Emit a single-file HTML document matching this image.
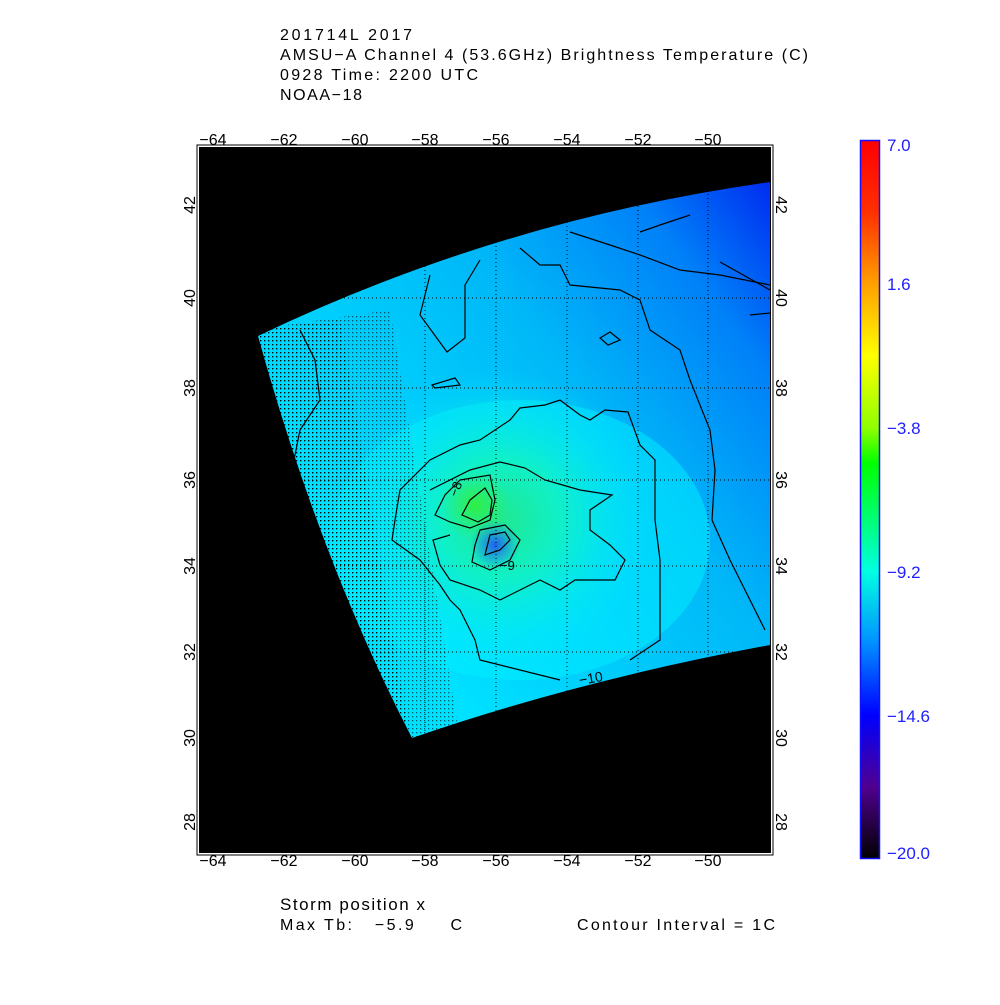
<!DOCTYPE html>
<html><head><meta charset="utf-8"><style>
body{margin:0;background:#fff;width:1000px;height:1000px;overflow:hidden;font-family:"Liberation Sans",sans-serif}
</style></head><body>
<svg width="1000" height="1000" xmlns="http://www.w3.org/2000/svg" font-family="Liberation Sans, sans-serif">
<defs>
<clipPath id="sw"><path d="M258,336 Q500,220 770,182 L770,645 Q580,680 412,738 Q320,560 258,336 Z"/></clipPath>
<radialGradient id="g1" cx="500" cy="520" r="150" gradientUnits="userSpaceOnUse">
<stop offset="0" stop-color="#20e890"/><stop offset="0.4" stop-color="#10f0c8"/><stop offset="1" stop-color="#00e8ff" stop-opacity="0"/></radialGradient>
<radialGradient id="g2" cx="475" cy="505" r="35" gradientUnits="userSpaceOnUse">
<stop offset="0" stop-color="#30ee40"/><stop offset="1" stop-color="#30ee60" stop-opacity="0"/></radialGradient>
<radialGradient id="g3" cx="495" cy="545" r="25" gradientUnits="userSpaceOnUse">
<stop offset="0" stop-color="#2060f0"/><stop offset="1" stop-color="#2080f0" stop-opacity="0"/></radialGradient>
<linearGradient id="bg" x1="330" y1="520" x2="770" y2="190" gradientUnits="userSpaceOnUse">
<stop offset="0" stop-color="#00e0ff"/><stop offset="0.5" stop-color="#00b8f8"/><stop offset="0.8" stop-color="#0080f8"/><stop offset="1" stop-color="#0030f0"/></linearGradient>
<linearGradient id="cb" x1="0" y1="0" x2="0" y2="1">
<stop offset="0" stop-color="#ff0000"/><stop offset="0.1" stop-color="#ff3000"/><stop offset="0.2" stop-color="#ffa000"/><stop offset="0.3" stop-color="#ffff00"/><stop offset="0.4" stop-color="#90ff00"/><stop offset="0.45" stop-color="#00ff00"/><stop offset="0.6" stop-color="#00ffe0"/><stop offset="0.7" stop-color="#0090ff"/><stop offset="0.8" stop-color="#0000ff"/><stop offset="0.9" stop-color="#500090"/><stop offset="1" stop-color="#000000"/></linearGradient>
<pattern id="dots" width="4" height="4" patternUnits="userSpaceOnUse"><rect width="1.3" height="1.3" fill="#000"/></pattern>
</defs>
<g font-size="16">
<text x="280" y="40" textLength="132">201714L 2017</text>
<text x="280" y="60" textLength="528">AMSU−A Channel 4 (53.6GHz) Brightness Temperature (C)</text>
<text x="280" y="80" textLength="198">0928 Time: 2200 UTC</text>
<text x="280" y="100" textLength="82">NOAA−18</text>
</g>
<rect x="199.5" y="147.5" width="571" height="705" fill="#000" stroke="#000"/>
<rect x="197" y="145" width="576" height="710" fill="none" stroke="#000" stroke-width="1"/>
<g clip-path="url(#sw)">
<rect x="200" y="150" width="570" height="600" fill="url(#bg)"/>
<ellipse cx="520" cy="540" rx="190" ry="140" fill="#00f0ff" opacity="0.5"/>
<rect x="200" y="150" width="570" height="600" fill="url(#g1)"/>
<rect x="200" y="150" width="570" height="600" fill="url(#g2)"/>
<rect x="200" y="150" width="570" height="600" fill="url(#g3)"/>
<path d="M250,330 L390,310 L460,740 L380,740 Z" fill="url(#dots)" opacity="0.6"/>
<path d="M250,330 L340,320 L410,740 L330,740 Z" fill="url(#dots)"/>
<g stroke="#000" stroke-width="1" stroke-dasharray="1,3">
<line x1="425" y1="150" x2="425" y2="750"/><line x1="496" y1="150" x2="496" y2="750"/><line x1="567" y1="150" x2="567" y2="750"/><line x1="638" y1="150" x2="638" y2="750"/><line x1="708" y1="150" x2="708" y2="750"/>
<line x1="200" y1="298" x2="770" y2="298"/><line x1="200" y1="388" x2="770" y2="388"/><line x1="200" y1="480" x2="770" y2="480"/><line x1="200" y1="566" x2="770" y2="566"/><line x1="200" y1="652" x2="770" y2="652"/>
</g>
<g fill="none" stroke="#000" stroke-width="1.2">
<path d="M430,275 L420,315 L447,352 L465,338 L465,285 L480,260"/>
<path d="M395,520 L400,490 L430,460 L460,445 L480,440 L510,420 L520,408 L545,405 L560,400 L580,415 L590,420 L605,410 L628,412 L640,445 L655,460 L655,520 L660,560 L660,640 L630,660"/>
<path d="M395,520 L392,540 L420,560 L440,585 L450,600 L460,610 L475,640 L480,660 L500,665 L540,675 L560,680"/>
<path d="M430,490 L470,470 L500,462 L525,468 L545,480 L580,490 L612,495 L590,510 L590,530 L610,545 L625,560 L615,580 L575,580 L560,590 L540,580 L500,600 L480,590 L450,580 L440,565 L433,540 L450,535"/>
<path d="M460,480 L490,475 L495,500 L490,520 L470,528 L450,522 L435,515 L445,495 Z"/>
<path d="M470,500 L485,488 L492,500 L490,515 L478,522 L462,515 Z"/>
<path d="M480,530 L505,525 L520,540 L510,560 L490,570 L472,562 L475,545 Z"/>
<path d="M490,535 L505,532 L510,540 L500,550 L485,555 Z"/>
<path d="M570,232 L610,245 L640,255 L680,270 L720,275 L770,285"/>
<path d="M520,248 L540,265 L560,265 L570,285 L620,290 L640,300 L650,330 L680,350 L690,380 L710,430 L715,470 L712,520 L730,560 L750,600 L765,630"/>
<path d="M640,232 L660,225 L690,215"/>
<path d="M720,262 L770,290"/><path d="M750,315 L770,313"/>
<path d="M600,338 L610,332 L620,340 L608,345 Z"/>
<path d="M432,385 L455,378 L460,385 L435,388 Z"/>
<path d="M300,330 L315,360 L320,400 L300,430 L290,480"/>
</g>
<text x="580" y="685" font-size="14" transform="rotate(-10 580 685)">−10</text>
<text x="452" y="490" font-size="13" transform="rotate(-70 460 490)">−8</text>
<text x="500" y="570" font-size="13">−9</text>
</g>
<g font-size="16" text-anchor="middle">
<text x="213" y="145">−64</text><text x="284" y="145">−62</text><text x="355" y="145">−60</text><text x="425" y="145">−58</text><text x="496" y="145">−56</text><text x="567" y="145">−54</text><text x="638" y="145">−52</text><text x="708" y="145">−50</text>
<text x="213" y="866">−64</text><text x="284" y="866">−62</text><text x="355" y="866">−60</text><text x="425" y="866">−58</text><text x="496" y="866">−56</text><text x="567" y="866">−54</text><text x="638" y="866">−52</text><text x="708" y="866">−50</text>
</g>
<g font-size="16" text-anchor="middle">
<text transform="translate(195,205) rotate(-90)">42</text><text transform="translate(195,298) rotate(-90)">40</text><text transform="translate(195,388) rotate(-90)">38</text><text transform="translate(195,480) rotate(-90)">36</text><text transform="translate(195,566) rotate(-90)">34</text><text transform="translate(195,652) rotate(-90)">32</text><text transform="translate(195,738) rotate(-90)">30</text><text transform="translate(195,822) rotate(-90)">28</text>
<text transform="translate(776,205) rotate(90)">42</text><text transform="translate(776,298) rotate(90)">40</text><text transform="translate(776,388) rotate(90)">38</text><text transform="translate(776,480) rotate(90)">36</text><text transform="translate(776,566) rotate(90)">34</text><text transform="translate(776,652) rotate(90)">32</text><text transform="translate(776,738) rotate(90)">30</text><text transform="translate(776,822) rotate(90)">28</text>
</g>
<rect x="860.5" y="140.5" width="19" height="718" fill="url(#cb)" stroke="#1010ff" stroke-width="1.5"/>
<g fill="#2020ff" font-size="17">
<text x="887" y="151">7.0</text><text x="887" y="290">1.6</text><text x="887" y="434">−3.8</text><text x="887" y="578">−9.2</text><text x="887" y="722">−14.6</text><text x="887" y="859">−20.0</text>
</g>
<text x="280" y="910" font-size="17" textLength="145">Storm position x</text>
<text x="280" y="930" font-size="16" xml:space="preserve" textLength="182">Max Tb:   −5.9     C</text>
<text x="577" y="930" font-size="16" textLength="198">Contour Interval = 1C</text>
</svg>
</body></html>
